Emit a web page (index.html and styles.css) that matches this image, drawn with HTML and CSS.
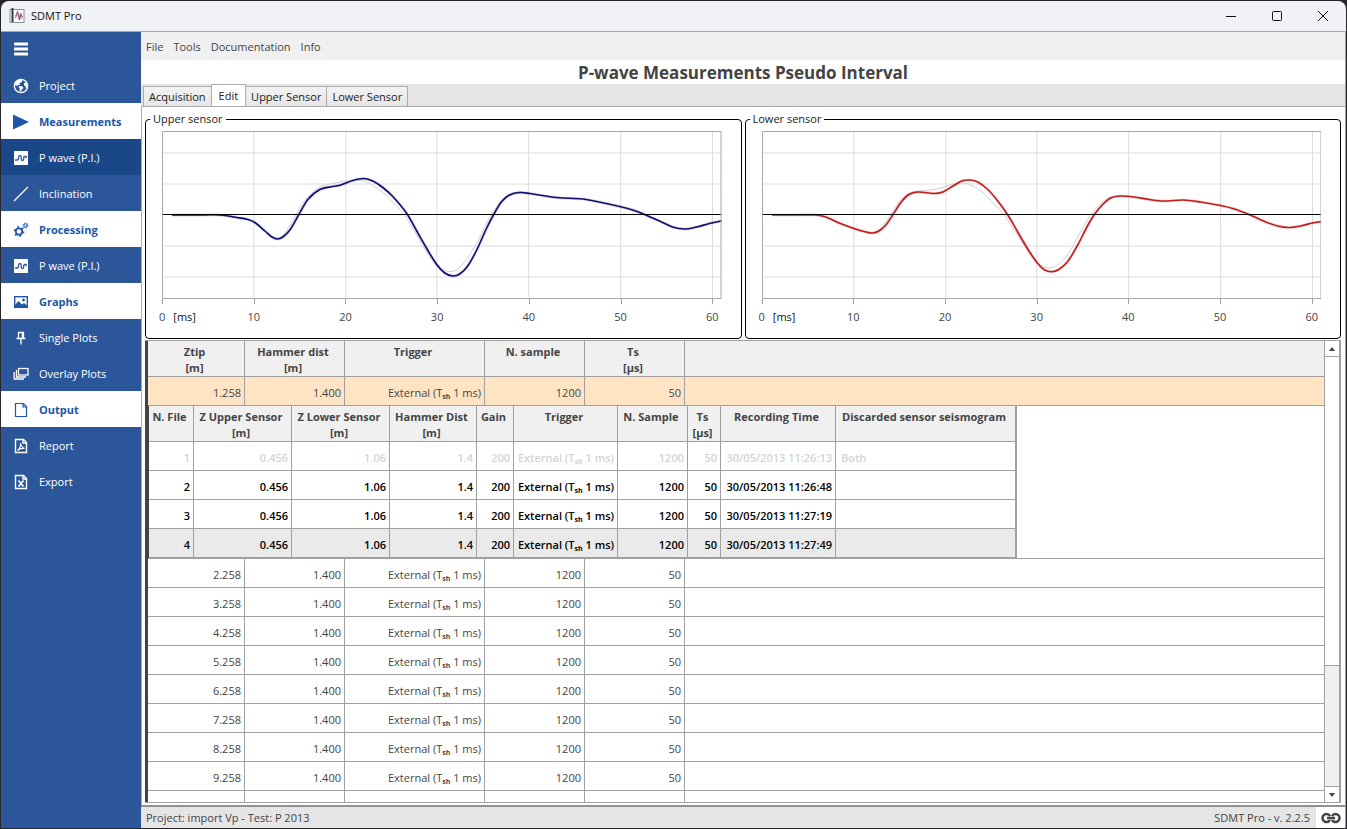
FILE: index.html
```html
<!DOCTYPE html>
<html lang="en">
<head>
  <meta charset="UTF-8" />
  <meta name="viewport" content="width=device-width, initial-scale=1.0"/>
  <title>SDMT Pro</title>
  <link rel="stylesheet" href="styles.css">
</head>
<body>
  <div class="window">
    <header class="titlebar">
      <svg class="app-icon" viewBox="0 0 16 16">
        <rect x="1" y="1.5" width="14" height="13" fill="#fff" stroke="#8a8f99"/>
        <path d="M3.5 0v14" stroke="#2d3a5c" stroke-width="2"/>
        <path d="M6 8h1l1.500-4 2 8 1.500-6 1 3h1" fill="none" stroke="#b0525c" stroke-width="1.200"/>
        <path d="M6.500 10l2-6 2 4 2 3" fill="none" stroke="#7d86a8"/>
      </svg>
      <span class="app-name">SDMT Pro</span>
      <button class="win-btn" aria-label="Minimize"><svg viewBox="0 0 12 12"><path d="M1 6.500h10"/></svg></button>
      <button class="win-btn" aria-label="Maximize"><svg viewBox="0 0 12 12"><rect x="1.500" y="1.500" width="9" height="9" rx="1"/></svg></button>
      <button class="win-btn" aria-label="Close"><svg viewBox="0 0 12 12"><path d="M1 1l10 10M11 1L1 11"/></svg></button>
    </header>

    <div class="layout">
      <nav class="sidebar">
        <button class="burger" aria-label="Menu">
          <svg viewBox="0 0 16 16"><path d="M1 3h14M1 8h14M1 13h14" stroke="currentColor" stroke-width="3"/></svg>
        </button>
        <a href="#">
          <svg viewBox="0 0 16 16"><circle cx="8" cy="8" r="6.700" fill="none" stroke="currentColor" stroke-width="1.300"/><path d="M2 5.500Q3.500 2 8 1.300L9.500 3 8 4.500 6.500 5 7 6.500 5 7 4.500 8 2 7zM6.500 8l3 .5 1 1.500L8.500 12 8 14 6.500 12.500 6.700 10.500 5.500 9zM11 5l3-.5.7 4-1.700 2-.5-2.500L11 7.500z" fill="currentColor"/></svg>
          Project
        </a>
        <a href="#" class="section">
          <svg viewBox="0 0 16 16"><path d="M0 .5L16 8 0 15.500z" fill="currentColor"/></svg>
          Measurements
        </a>
        <a href="#" class="selected">
          <svg viewBox="0 0 16 16"><rect x="1" y="1" width="14" height="14" fill="currentColor"/><path class="wave" d="M2.500 9.500v.5h2c1 0 1-1 1-2.500S6 5.500 7 5.500s1.200.5 1.200 2v1.200c0 1.300.3 1.800 1.300 1.800s1.300-.6 1.300-2V6.500M10.800 6.500h1.700c.8 0 1 .5 1 1.500"/></svg>
          P wave (P.I.)
        </a>
        <a href="#">
          <svg viewBox="0 0 16 16"><path d="M1 15L15 1" stroke="currentColor" stroke-width="1.300"/></svg>
          Inclination
        </a>
        <a href="#" class="section">
          <svg viewBox="0 0 16 16" fill="none" stroke="currentColor"><circle cx="6" cy="9.500" r="3.200" stroke-width="1.800"/><circle cx="6" cy="9.500" r="4.600" stroke-width="1.600" stroke-dasharray="1.800 3.020"/><circle cx="12.500" cy="3.500" r="1.700" stroke-width="1.100"/><circle cx="12.500" cy="3.500" r="2.600" stroke-dasharray="1 1.720"/></svg>
          Processing
        </a>
        <a href="#">
          <svg viewBox="0 0 16 16"><rect x="1" y="1" width="14" height="14" fill="currentColor"/><path class="wave" d="M2.500 9.500v.5h2c1 0 1-1 1-2.500S6 5.500 7 5.500s1.200.5 1.200 2v1.200c0 1.300.3 1.800 1.300 1.800s1.300-.6 1.300-2V6.500M10.800 6.500h1.700c.8 0 1 .5 1 1.500"/></svg>
          P wave (P.I.)
        </a>
        <a href="#" class="section">
          <svg viewBox="0 0 16 16"><rect x="1.700" y="2.700" width="12.600" height="10.600" fill="none" stroke="currentColor" stroke-width="1.400"/><path d="M2 11l3.500-4L9 10.500 11 9l3 2.500V13H2z" fill="currentColor"/><circle cx="10.500" cy="6" r="1.400" fill="currentColor"/></svg>
          Graphs
        </a>
        <a href="#">
          <svg viewBox="0 0 16 16" fill="none" stroke="currentColor"><path d="M5.500 8V2.500h5V8M3.500 8.500h9M8 9v5.500" stroke-width="1.300"/><path d="M9.500 3v5" stroke-width="1.500"/></svg>
          Single Plots
        </a>
        <a href="#">
          <svg viewBox="0 0 16 16" fill="none" stroke="currentColor" stroke-width="1.300"><rect x="5.500" y="2.500" width="9.500" height="6.500"/><path d="M3.500 4v7h9.500M1.200 6v7H11"/></svg>
          Overlay Plots
        </a>
        <a href="#" class="section">
          <svg viewBox="0 0 16 16" fill="none" stroke="currentColor" stroke-width="1.200"><path d="M2.500 1.500h8l3 3v10h-11zM10 1.500V5h3.500"/></svg>
          Output
        </a>
        <a href="#">
          <svg viewBox="0 0 16 16" fill="none" stroke="currentColor" stroke-width="1.400"><path d="M2.500 1.500h8l3 3v10h-11zM10 1.500V5h3.500"/><path d="M7.500 5c.5 3 1.500 4.500 4 5.500-3-.5-5 .2-7 2 2-1.500 3.300-4.500 3-7.500z" stroke-width="1.100"/></svg>
          Report
        </a>
        <a href="#">
          <svg viewBox="0 0 16 16" fill="none" stroke="currentColor" stroke-width="1.400"><path d="M2.500 1.500h8l3 3v10h-11zM10 1.500V5h3.500"/><path d="M5.500 6.500l5 6M10.500 6.500l-5 6" stroke-width="1.700"/></svg>
          Export
        </a>
      </nav>

      <main class="main">
        <div class="menubar">
          <a href="#">File</a>
          <a href="#">Tools</a>
          <a href="#">Documentation</a>
          <a href="#">Info</a>
        </div>
        <h1>P-wave Measurements Pseudo Interval</h1>
        <div class="tabs">
          <button>Acquisition</button>
          <button class="active">Edit</button>
          <button>Upper Sensor</button>
          <button>Lower Sensor</button>
        </div>

        <div class="tab-page">
          <div class="charts">
            <fieldset class="chart">
              <legend>Upper sensor</legend>
              <svg class="plot" id="upperPlot" viewBox="0 0 560 168" preserveAspectRatio="none">
                <path class="grid" d="M92 0v168M184 0v168M275 0v168M367 0v168M459 0v168M551 0v168M0 22h560M0 53h560M0 115h560M0 146h560"/>
              </svg>
              <div class="ticks"><i></i><i></i><i></i><i></i><i></i><i></i><i></i></div>
              <div class="axis"><span>0<b>[ms]</b></span><span>10</span><span>20</span><span>30</span><span>40</span><span>50</span><span>60</span></div>
            </fieldset>
            <fieldset class="chart">
              <legend>Lower sensor</legend>
              <svg class="plot" id="lowerPlot" viewBox="0 0 560 168" preserveAspectRatio="none">
                <path class="grid" d="M92 0v168M184 0v168M275 0v168M367 0v168M459 0v168M551 0v168M0 22h560M0 53h560M0 115h560M0 146h560"/>
              </svg>
              <div class="ticks"><i></i><i></i><i></i><i></i><i></i><i></i><i></i></div>
              <div class="axis"><span>0<b>[ms]</b></span><span>10</span><span>20</span><span>30</span><span>40</span><span>50</span><span>60</span></div>
            </fieldset>
          </div>

          <div class="grid-view">
            <div class="grid-scroll">
              <table class="tests">
                <colgroup>
                  <col class="w-ztip"><col class="w-std"><col class="w-trigger"><col class="w-std"><col class="w-std"><col>
                </colgroup>
                <thead>
                  <tr><th>Ztip<br>[m]</th><th>Hammer dist<br>[m]</th><th>Trigger</th><th>N. sample</th><th>Ts<br>[µs]</th><th></th></tr>
                </thead>
                <tbody>
                  <tr class="current"><td>1.258</td><td>1.400</td><td>External (T<sub>sh</sub> 1 ms)</td><td>1200</td><td>50</td><td></td></tr>
                  <tr class="detail">
                    <td colspan="6">
                      <table class="files">
                        <colgroup>
                          <col class="f-file"><col class="f-z"><col class="f-z"><col class="f-hammer"><col class="f-gain"><col class="f-trigger"><col class="f-sample"><col class="f-ts"><col class="f-time"><col class="f-discard">
                        </colgroup>
                        <thead>
                          <tr><th>N. File</th><th>Z Upper Sensor<br>[m]</th><th>Z Lower Sensor<br>[m]</th><th>Hammer Dist<br>[m]</th><th>Gain</th><th>Trigger</th><th>N. Sample</th><th>Ts<br>[µs]</th><th>Recording Time</th><th>Discarded sensor seismogram</th></tr>
                        </thead>
                        <tbody>
                          <tr class="discarded"><td>1</td><td>0.456</td><td>1.06</td><td>1.4</td><td>200</td><td>External (T<sub>sh</sub> 1 ms)</td><td>1200</td><td>50</td><td>30/05/2013 11:26:13</td><td>Both</td></tr>
                          <tr><td>2</td><td>0.456</td><td>1.06</td><td>1.4</td><td>200</td><td>External (T<sub>sh</sub> 1 ms)</td><td>1200</td><td>50</td><td>30/05/2013 11:26:48</td><td></td></tr>
                          <tr><td>3</td><td>0.456</td><td>1.06</td><td>1.4</td><td>200</td><td>External (T<sub>sh</sub> 1 ms)</td><td>1200</td><td>50</td><td>30/05/2013 11:27:19</td><td></td></tr>
                          <tr class="picked"><td>4</td><td>0.456</td><td>1.06</td><td>1.4</td><td>200</td><td>External (T<sub>sh</sub> 1 ms)</td><td>1200</td><td>50</td><td>30/05/2013 11:27:49</td><td></td></tr>
                        </tbody>
                      </table>
                    </td>
                  </tr>
                  <tr><td>2.258</td><td>1.400</td><td>External (T<sub>sh</sub> 1 ms)</td><td>1200</td><td>50</td><td></td></tr>
                  <tr><td>3.258</td><td>1.400</td><td>External (T<sub>sh</sub> 1 ms)</td><td>1200</td><td>50</td><td></td></tr>
                  <tr><td>4.258</td><td>1.400</td><td>External (T<sub>sh</sub> 1 ms)</td><td>1200</td><td>50</td><td></td></tr>
                  <tr><td>5.258</td><td>1.400</td><td>External (T<sub>sh</sub> 1 ms)</td><td>1200</td><td>50</td><td></td></tr>
                  <tr><td>6.258</td><td>1.400</td><td>External (T<sub>sh</sub> 1 ms)</td><td>1200</td><td>50</td><td></td></tr>
                  <tr><td>7.258</td><td>1.400</td><td>External (T<sub>sh</sub> 1 ms)</td><td>1200</td><td>50</td><td></td></tr>
                  <tr><td>8.258</td><td>1.400</td><td>External (T<sub>sh</sub> 1 ms)</td><td>1200</td><td>50</td><td></td></tr>
                  <tr><td>9.258</td><td>1.400</td><td>External (T<sub>sh</sub> 1 ms)</td><td>1200</td><td>50</td><td></td></tr>
                  <tr><td></td><td></td><td></td><td></td><td></td><td></td></tr>
                </tbody>
              </table>
            </div>
            <div class="scrollbar">
              <button aria-label="Scroll up"><svg viewBox="0 0 8 8"><path d="M4 2l3 4H1z"/></svg></button>
              <div class="track"><div class="thumb"></div></div>
              <button aria-label="Scroll down"><svg viewBox="0 0 8 8"><path d="M1 2h6L4 6z"/></svg></button>
            </div>
          </div>
        </div>

        <footer class="statusbar">
          <span>Project: import Vp - Test: P 2013</span>
          <span class="version">SDMT Pro - v. 2.2.5</span>
          <button class="link" aria-label="Connection">
            <svg viewBox="0 0 20 12" fill="none" stroke="#444" stroke-width="2.500"><path d="M9 4Q8 2 5.500 2a4 4 0 0 0 0 8Q8 10 9 8M11 4q1-2 3.500-2a4 4 0 0 1 0 8Q12 10 11 8M6 6h8"/></svg>
          </button>
        </footer>
      </main>
    </div>
  </div>

  <script>
    const upper = [[10,84],[35,84],[58,84],[75,86.5],[86,88.5],[93,91.5],[103,100],[110,106],[115.5,108],[121,106],[128,99],[137,83.5],[146,68.5],[158,58.5],[171,55.5],[179,54],[191,49.5],[202,47.5],[211,50],[221,56.5],[231,65.5],[245,82.5],[255,100],[265,117.5],[275,133.5],[283,142],[291,145],[298,143],[306,135],[315,119],[325,97],[332,83.5],[340,70.5],[348,64],[358,61.5],[368,62.5],[395,66.5],[421,68],[435,70.5],[458,75.5],[471,79],[483,83.5],[498,90],[511,96],[523,98],[535,96],[548,92.5],[560,90]];
    const upperPrev = [[10,84],[58,84],[75,86.5],[86,88.5],[93,91.5],[103,100],[110,105],[116,107],[121,104],[128,95],[136,80],[145,67],[158,56],[171,52.5],[185,50],[196,49],[206,51.5],[211,54.5],[221,61.5],[231,71],[243,85],[255,104],[265,121],[275,135],[285,140],[290,140.5],[296,138],[305,128],[315,112],[325,92],[332,80],[341,68],[349,62.5],[358,61],[368,62]];
    const lower = [[10,84],[35,84],[54,84],[64,86],[76,91.5],[92,97.5],[104,101],[111,102],[117,100],[124,94],[131.5,83],[139,71.5],[147,63.5],[156,61],[172,62.5],[181,61],[192,54.5],[200,50],[208,49],[216,51],[226,58.5],[236,70],[246,84],[256,101],[266,118],[276,132.5],[283,139],[290,140.7],[297,138.5],[306,130.5],[316,114],[326,94.5],[333,83],[341,73.5],[349,67],[359,65],[372,66],[389,68.7],[402,70],[422,69],[439,71],[459,74.5],[472,77.7],[488,83.7],[502,90],[516,95],[527,96.5],[539,95],[551,92],[560,90.5]];
    const lowerPrev = [[10,84],[54,84],[64,86],[76,91.5],[92,97.5],[104,101],[111,101.5],[117,99],[123,92],[130,82],[138,70],[147,62.5],[158,60],[172,58.5],[182,56],[192,53],[202,52],[209,54],[219,60],[229,69.5],[242,84],[255,103],[266,120],[276,133],[284,136.5],[290,136.5],[296,134],[305,125],[315,108],[325,90],[332,80],[341,71],[349,66],[359,64.5]];

    // slope of the curve at sample i
    function slope(p, i) {
      const a = p[i - 1] || p[i], c = p[i + 1] || p[i];
      return (c[1] - a[1]) / (c[0] - a[0]);
    }

    // smooth line through all the samples
    function toPath(p) {
      let d = "M" + p[0];
      for (let i = 0; i < p.length - 1; i++) {
        const b = p[i], c = p[i + 1], h = (c[0] - b[0]) / 3;
        d += "C" + [b[0] + h, b[1] + h * slope(p, i), c[0] - h, c[1] - h * slope(p, i + 1), c[0], c[1]];
      }
      return d;
    }

    function addPath(svg, cls, d) {
      const path = document.createElementNS("http://www.w3.org/2000/svg", "path");
      path.setAttribute("class", cls);
      path.setAttribute("d", d);
      svg.appendChild(path);
    }

    function drawPlot(id, name, current, previous) {
      const svg = document.getElementById(id);
      addPath(svg, "prev", toPath(previous));
      addPath(svg, "halo " + name, toPath(current));
      addPath(svg, "curve " + name, toPath(current));
      addPath(svg, "zero", "M0 83.5h560");
      addPath(svg, "frame", "M.5 .5h559v167H.5z");
    }

    drawPlot("upperPlot", "upper", upper, upperPrev);
    drawPlot("lowerPlot", "lower", lower, lowerPrev);
  </script>
</body>
</html>
```
FILE: styles.css
```css
* {
  box-sizing: border-box;
}
body {
  margin: 0;
  background: #26262b;
  font-family: "Open Sans", "Noto Sans", sans-serif;
  font-size: 11px;
  line-height: 16px;
  color: #444;
}
button {
  font: inherit;
  color: inherit;
  border: none;
  background: none;
  padding: 0;
}
a {
  color: inherit;
  text-decoration: none;
}
.window {
  height: 100vh;
  padding: 1px;
  display: flex;
  flex-direction: column;
}
.titlebar {
  display: flex;
  align-items: center;
  height: 31px;
  padding-left: 8px;
  background: #f1f2f5;
  border-bottom: 1px solid #a5a9b0;
  border-radius: 8px 8px 0 0;
  color: #111;
}
.app-icon {
  width: 16px;
  height: 16px;
  margin-right: 6px;
}
.app-name {
  flex: 1;
}
.win-btn {
  width: 46px;
  height: 30px;
  display: flex;
  align-items: center;
  justify-content: center;
}
.win-btn svg {
  width: 12px;
  height: 12px;
  fill: none;
  stroke: #111;
}
.layout {
  flex: 1;
  display: flex;
  min-height: 0;
}

/* sidebar */
.sidebar {
  width: 140px;
  flex: none;
  background: #2b579a;
  color: #fff;
}
.sidebar a, .burger {
  display: flex;
  align-items: center;
  gap: 10px;
  width: 100%;
  height: 36px;
  padding: 1px 0 0 12px;
}
.sidebar svg {
  width: 16px;
  height: 16px;
}
.sidebar .burger {
  height: 35px;
  padding: 0 0 2px 12px;
}
.sidebar .section {
  background: #fff;
  color: #2056a5;
  font-weight: bold;
}
.sidebar .selected {
  background: #194788;
}
.wave {
  fill: none;
  stroke: #2b579a;
  stroke-width: 1.3;
}

/* main area */
.main {
  flex: 1;
  min-width: 0;
  display: flex;
  flex-direction: column;
  background: #fff;
  border-right: 1px solid #a0a0a0;
}
.menubar {
  display: flex;
  align-items: center;
  gap: 10px;
  height: 28px;
  padding: 2px 0 0 5px;
  background: #f0f0f0;
}
h1 {
  margin: 0;
  padding-top: 1px;
  font-size: 17px;
  line-height: 23px;
  text-align: center;
}
.tabs {
  display: flex;
  align-items: flex-end;
  height: 22px;
  padding-left: 2px;
  background: #e5e5e5;
}
.tabs button {
  height: 20px;
  padding: 0 5px;
  background: linear-gradient(#f3f3f3, #e6e6e6);
  border: 1px solid #acacac;
  border-bottom: none;
  margin-right: -1px;
  color: #222;
}
.tabs .active {
  height: 22px;
  padding: 0 7px;
  background: #fff;
}
.tab-page {
  flex: 1;
  min-height: 0;
  display: flex;
  flex-direction: column;
  border-top: 1px solid #acacac;
  border-left: 1px solid #acacac;
  padding: 4px 4px 2px 3px;
}

/* charts */
.charts {
  display: flex;
  gap: 3px;
  margin-bottom: 1px;
}
.chart {
  flex: 1;
  min-width: 0;
  margin: 0;
  padding: 4px 19px 13px 16px;
  border: 1px solid #000;
  border-radius: 4px;
}
.chart legend {
  margin-left: -12px;
  padding: 0 3px;
  color: #222;
}
.plot {
  display: block;
  width: 100%;
  height: 168px;
}
.plot path {
  fill: none;
  vector-effect: non-scaling-stroke;
}
.plot .grid {
  stroke: #dcdcdc;
}
.plot .prev {
  stroke: #d0d0d4;
}
.plot .curve {
  stroke-width: 1.6;
}
.plot .halo {
  stroke-width: 3;
  opacity: 0.15;
}
.plot .upper {
  stroke: #10106e;
}
.plot .lower {
  stroke: #c41c1c;
}
.plot .zero {
  stroke: #000;
}
.plot .frame {
  stroke: #a6a6a6;
}
.ticks, .axis {
  display: grid;
  grid-template-columns: repeat(6, minmax(0, 10fr)) minmax(0, 1fr);
}
.ticks i {
  height: 5px;
  border-left: 1px solid #a0a0a0;
}
.axis {
  padding-top: 5px;
}
.axis span {
  justify-self: start;
  transform: translateX(-50%);
}
.axis span:first-child {
  transform: translateX(-3px);
}
.axis b {
  margin-left: 8px;
  font-weight: normal;
  color: #111;
}

/* data grid */
.grid-view {
  flex: 1;
  min-height: 0;
  display: flex;
  border: 1px solid #a0a0a0;
  border-left: none;
}
.grid-scroll {
  flex: 1;
  min-width: 0;
  overflow: hidden;
}
table {
  table-layout: fixed;
  border-collapse: separate;
  border-spacing: 0;
}
.tests {
  width: 100%;
  border-left: 3px solid #444;
}
th {
  height: 36px;
  padding: 3px 3px 0 0;
  vertical-align: top;
  text-align: center;
  background: #f0f0f0;
  border-right: 1px solid #a0a0a0;
  border-bottom: 1px solid #a0a0a0;
  white-space: nowrap;
}
td {
  height: 29px;
  padding: 4px 3px 0 0;
  text-align: right;
  border-right: 1px solid #a0a0a0;
  border-bottom: 1px solid #a0a0a0;
  white-space: nowrap;
}
sub {
  font-size: 7px;
  font-weight: bold;
  line-height: 0;
  vertical-align: -2px;
}
.tests > thead th:last-child, .tests > tbody > tr > td:last-child {
  border-right: none;
}
.w-ztip { width: 97px; }
.w-std { width: 100px; }
.w-trigger { width: 140px; }
.current td {
  background: #ffe4c4;
}
.tests .detail > td {
  padding: 0;
}
.files {
  width: 869px;
  border-left: 1px solid #444;
  border-right: 1px solid #a0a0a0;
  font-weight: 600;
  color: #000;
}
.files th {
  color: #444;
}
.files td:last-child {
  text-align: left;
  padding-left: 5px;
}
.f-file { width: 45px; }
.f-z { width: 98px; }
.f-hammer { width: 87px; }
.f-gain { width: 37px; }
.f-trigger { width: 104px; }
.f-sample { width: 70px; }
.f-ts { width: 33px; }
.f-time { width: 115px; }
.f-discard { width: 180px; }
.files .discarded td {
  color: #d3d3d3;
}
.picked td {
  background: #eaeaea;
}

.scrollbar {
  width: 16px;
  display: flex;
  flex-direction: column;
  background: #f0f0f0;
  border-left: 1px solid #a0a0a0;
  border-right: 1px solid #a0a0a0;
}
.scrollbar button {
  height: 15px;
  display: flex;
  align-items: center;
  justify-content: center;
  background: #fff;
}
.scrollbar svg {
  width: 8px;
  height: 8px;
  fill: #444;
}
.track {
  flex: 1;
  border-top: 1px solid #a0a0a0;
  border-bottom: 1px solid #a0a0a0;
}
.thumb {
  height: 72%;
  background: #fff;
  border-bottom: 1px solid #a0a0a0;
}

.statusbar {
  display: flex;
  align-items: center;
  height: 23px;
  padding-left: 5px;
  background: #e5e5e5;
  border-top: 2px solid #909090;
}
.version {
  margin-left: auto;
  margin-right: 6px;
}
.link {
  width: 29px;
  align-self: stretch;
  display: flex;
  align-items: center;
  justify-content: center;
  background: #fff;
}
.link svg {
  width: 20px;
  height: 12px;
}
```
